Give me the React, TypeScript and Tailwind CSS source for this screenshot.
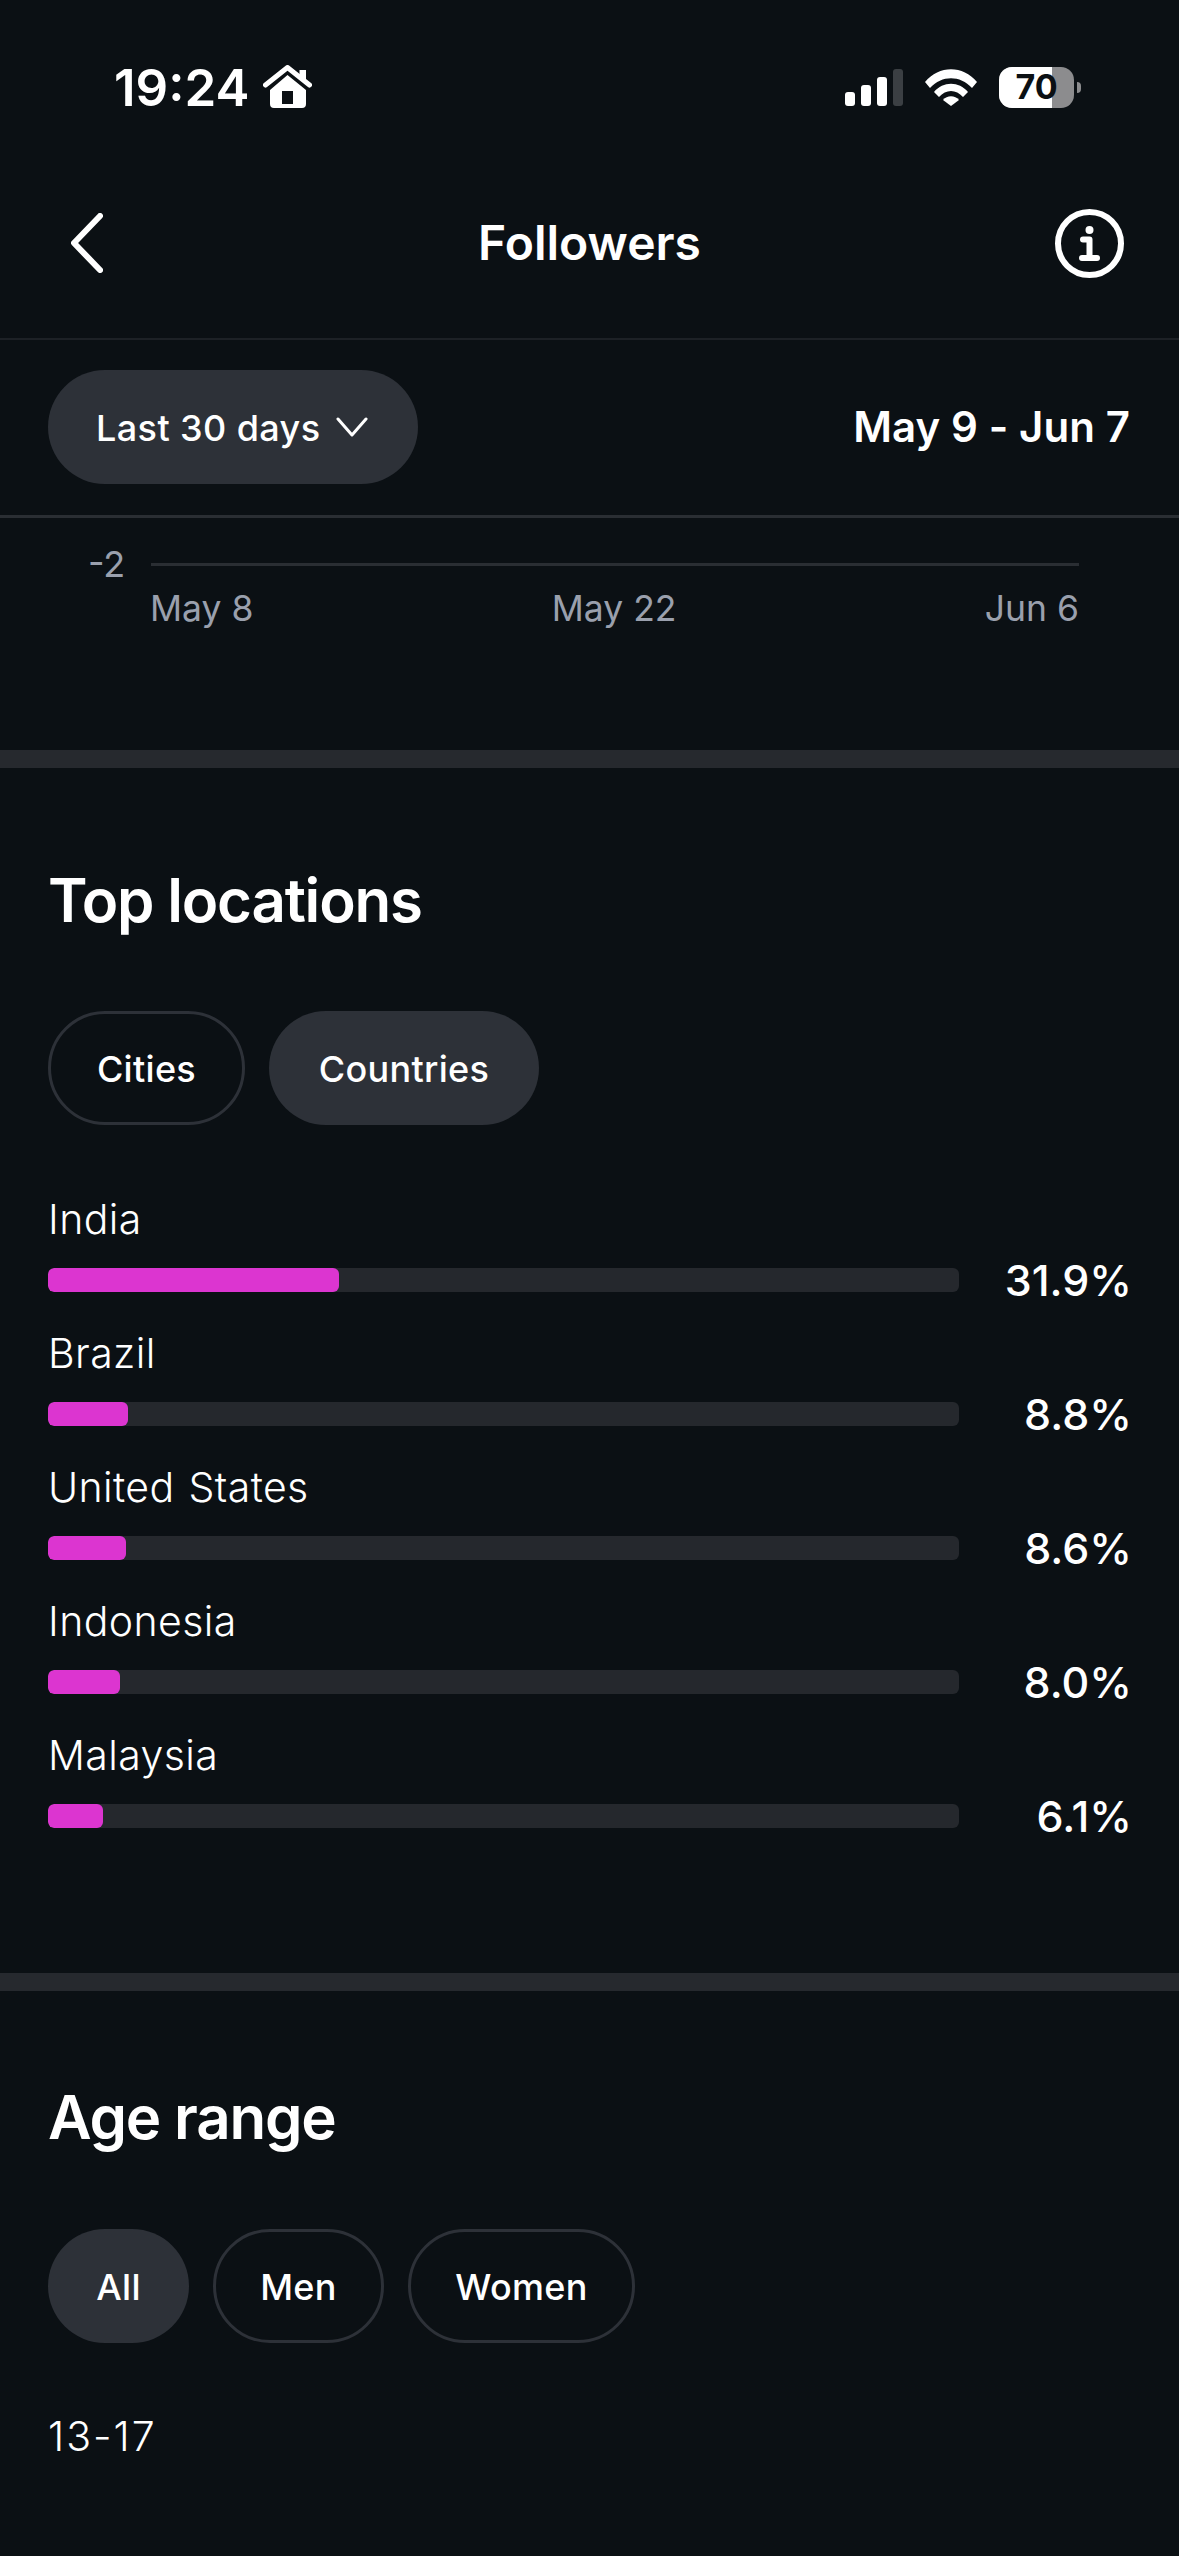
import React from 'react';

const countries = [
    { name: 'India', pct: '31.9%', width: 291 },
    { name: 'Brazil', pct: '8.8%', width: 80 },
    { name: 'United States', pct: '8.6%', width: 78 },
    { name: 'Indonesia', pct: '8.0%', width: 72 },
    { name: 'Malaysia', pct: '6.1%', width: 55 },
];

const Pill: React.FC<{ label: string; width: string; active?: boolean }> = ({ label, width, active }) => (
    <div
        className={`h-[114px] pt-[2px] rounded-full flex items-center justify-center text-[36px] font-medium tracking-[0.3px] text-white ${width} ${active ? 'bg-[#2d3138]' : 'border-[3px] border-[#2d3138]'}`}
    >
        {label}
    </div>
);

const HomeIcon = () => (
    <svg width="49" height="44" viewBox="0 0 49 44" fill="none">
        <path d="M2.5 20 L24.5 2.5 L46.5 20" stroke="white" strokeWidth="5" strokeLinecap="round" strokeLinejoin="round" />
        <path d="M36.5 5 H43 V15 L36.5 10 Z" fill="white" />
        <path fillRule="evenodd" d="M24.5 10 L43 25 V39 Q43 43 39 43 H11 Q7 43 7 39 V25 Z M19 26 V39 H30 V26 Z" fill="white" />
    </svg>
);

const SignalIcon = () => (
    <div className="flex items-end gap-[6px] h-[37px]">
        <div className="w-[10px] h-[14px] rounded-[3px] bg-white" />
        <div className="w-[10px] h-[21px] rounded-[3px] bg-white" />
        <div className="w-[10px] h-[29px] rounded-[3px] bg-white" />
        <div className="w-[10px] h-[37px] rounded-[3px] bg-[#3b3f43]" />
    </div>
);

const WifiIcon = () => (
    <svg width="52" height="37" viewBox="0 0 52 37" fill="white">
        <path d="M0 13 C14 -4 38 -4 52 13 L47 19 C35 6 17 6 5 19 Z" />
        <path d="M9 23 C18 12 34 12 43 23 L38 28 C31 20 21 20 14 28 Z" />
        <path d="M18 31 C22 26 30 26 34 31 L26 37 Z" />
    </svg>
);

const Battery = () => (
    <div className="flex items-center gap-[3px]">
        <div className="relative w-[75px] h-[41px] rounded-[13px] overflow-hidden bg-[#8c8c8e] flex items-center justify-center">
            <div className="absolute left-0 top-0 bottom-0 w-[53px] bg-white" />
            <span className="relative text-[34px] font-bold leading-none text-[#0b1014]">70</span>
        </div>
        <div className="w-[4px] h-[11px] rounded-r-full bg-[#8c8c8e]" />
    </div>
);

const InfoIcon = () => (
    <svg width="69" height="69" viewBox="0 0 69 69" fill="none">
        <circle cx="34.5" cy="34.5" r="31.5" stroke="white" strokeWidth="6" />
        <circle cx="34.5" cy="21" r="4" fill="white" />
        <path d="M28 30.5 H34.5 V48 M27 49 H42" stroke="white" strokeWidth="6" strokeLinecap="round" strokeLinejoin="round" />
    </svg>
);

export default function App() {
    return (
        <div className="w-[1179px] h-[2556px] overflow-hidden bg-[#0b1014] text-white font-['Inter',sans-serif]">
            {/* status bar */}
            <div className="h-[148px] pt-[62px] pl-[114px] pr-[98px] flex items-start justify-between">
                <div className="flex items-center gap-[14px] h-[50px]">
                    <span className="text-[51px] font-semibold leading-none">19:24</span>
                    <HomeIcon />
                </div>
                <div className="flex items-center gap-[22px] h-[50px]">
                    <SignalIcon />
                    <WifiIcon />
                    <Battery />
                </div>
            </div>

            {/* nav */}
            <div className="h-[192px] border-b-[2px] border-[#1d2126] px-[55px] flex items-center justify-between">
                <div className="w-[69px] pl-[16px]">
                    <svg width="32" height="60" viewBox="0 0 32 60" fill="none">
                        <path d="M29 3 L3 30 L29 57" stroke="white" strokeWidth="6" strokeLinecap="round" strokeLinejoin="round" />
                    </svg>
                </div>
                <span className="text-[48px] font-semibold">Followers</span>
                <InfoIcon />
            </div>

            {/* date range */}
            <div className="h-[175px] pb-[1px] pl-[48px] pr-[49px] flex items-center justify-between">
                <div className="h-[114px] w-[370px] rounded-full bg-[#2d3138] flex items-center pl-[48px] gap-[16px]">
                    <span className="text-[36px] font-medium tracking-[0.4px] pt-[1px]">Last 30 days</span>
                    <svg width="32" height="20" viewBox="0 0 32 20" fill="none">
                        <path d="M2 2 L16 18 L30 2" stroke="white" strokeWidth="3" strokeLinecap="round" strokeLinejoin="round" />
                    </svg>
                </div>
                <span className="text-[42px] font-semibold tracking-[0.1px] pb-[2px]">May 9 - Jun 7</span>
            </div>
            <div className="h-[3px] bg-[#2a2e33]" />

            {/* chart tail */}
            <div className="h-[232px] pt-[28px] pl-[88px] pr-[100px]">
                <div className="flex items-center gap-[26px] h-[36px]">
                    <span className="text-[36px] leading-none text-[#9aa0ad]">-2</span>
                    <div className="flex-1 h-[3px] bg-[#2a2e33]" />
                </div>
                <div className="mt-[5px] ml-[62px] flex justify-between text-[35.5px] leading-[44px] text-[#9aa0ad]">
                    <span>May 8</span>
                    <span className="mr-[10px]">May 22</span>
                    <span>Jun 6</span>
                </div>
            </div>
            <div className="h-[18px] bg-[#26292e]" />

            {/* top locations */}
            <div className="pt-[96px] pb-[108px] px-[48px]">
                <h2 className="text-[60px] leading-[72px] font-semibold tracking-[-1.2px]">Top locations</h2>
                <div className="mt-[75px] flex gap-[24px]">
                    <Pill label="Cities" width="w-[197px]" />
                    <Pill label="Countries" width="w-[270px]" active />
                </div>
                <div className="mt-[70px]">
                    {countries.map((c) => (
                        <div key={c.name} className="h-[134px]">
                            <div className="text-[41px] leading-[48px] font-[350] tracking-[0.4px] [word-spacing:2px]">{c.name}</div>
                            <div className="mt-[25px] h-[24px] flex items-center justify-between">
                                <div className="w-[911px] h-[24px] rounded-[6px] bg-[#25282d] overflow-hidden">
                                    <div className="h-full rounded-[6px] bg-[#dc35d0]" style={{ width: c.width }} />
                                </div>
                                <span className="-mr-[1px] text-[43px] font-medium leading-[24px]">{c.pct}</span>
                            </div>
                        </div>
                    ))}
                </div>
            </div>
            <div className="h-[18px] bg-[#26292e]" />

            {/* age range */}
            <div className="pt-[90px] px-[48px]">
                <h2 className="text-[60px] leading-[72px] font-semibold tracking-[-1.2px]">Age range</h2>
                <div className="mt-[76px] flex gap-[24px]">
                    <Pill label="All" width="w-[141px]" active />
                    <Pill label="Men" width="w-[171px]" />
                    <Pill label="Women" width="w-[227px]" />
                </div>
                <div className="mt-[68px] text-[41px] leading-[50px] font-[350] tracking-[2px]">13-17</div>
            </div>
        </div>
    );
}
